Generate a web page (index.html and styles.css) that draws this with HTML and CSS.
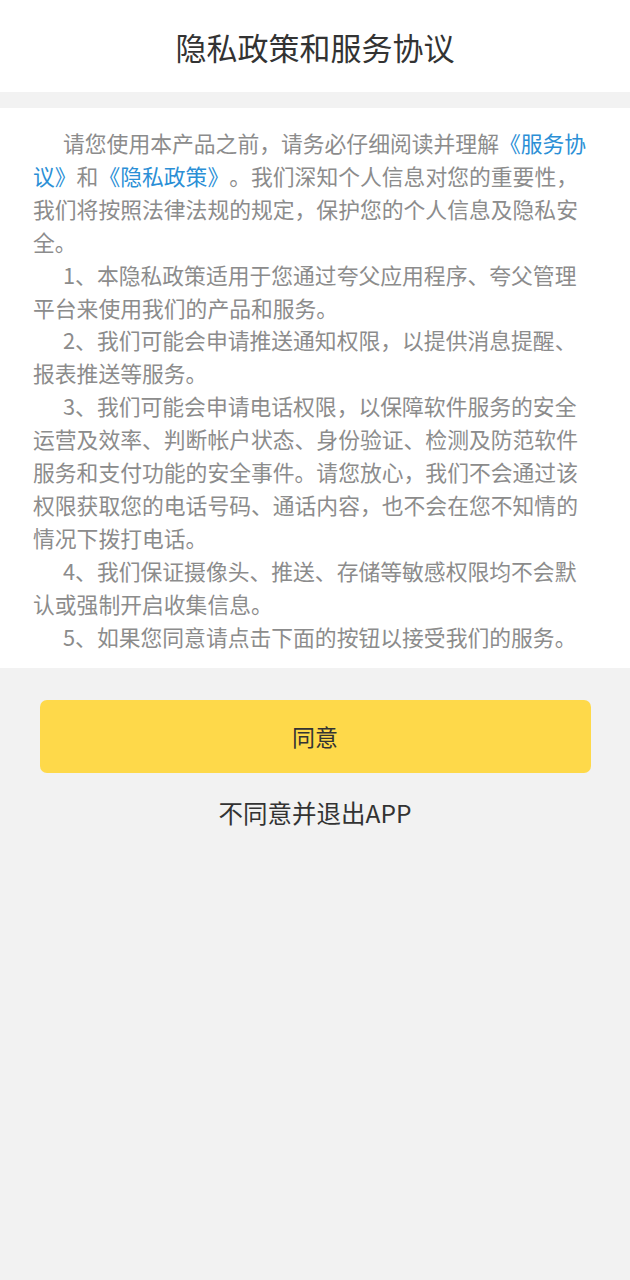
FILE: index.html
```html
<!DOCTYPE html>
<html lang="zh-CN">
<head>
<meta charset="utf-8">
<title>隐私政策和服务协议</title>
<link rel="stylesheet" href="styles.css">
</head>
<body>
<div class="page">
  <header class="header">隐私政策和服务协议</header>
  <section class="content">
    <p>请您使用本产品之前，请务必仔细阅读并理解<a class="link">《服务协议》</a>和<a class="link">《隐私政策》</a>。我们深知个人信息对您的重要性，我们将按照法律法规的规定，保护您的个人信息及隐私安全。</p>
    <p>1、本隐私政策适用于您通过夸父应用程序、夸父管理平台来使用我们的产品和服务。</p>
    <p>2、我们可能会申请推送通知权限，以提供消息提醒、报表推送等服务。</p>
    <p>3、我们可能会申请电话权限，以保障软件服务的安全运营及效率、判断帐户状态、身份验证、检测及防范软件服务和支付功能的安全事件。请您放心，我们不会通过该权限获取您的电话号码、通话内容，也不会在您不知情的情况下拨打电话。</p>
    <p>4、我们保证摄像头、推送、存储等敏感权限均不会默认或强制开启收集信息。</p>
    <p>5、如果您同意请点击下面的按钮以接受我们的服务。</p>
  </section>
  <div class="actions">
    <button class="agree">同意</button>
    <button class="disagree">不同意并退出APP</button>
  </div>
</div>
</body>
</html>
```

FILE: styles.css
```css
html, body {
  margin: 0;
  padding: 0;
  background: #f2f2f2;
}
body {
  font-family: "Noto Sans CJK SC", "Noto Sans", sans-serif;
  width: 630px;
  min-height: 1280px;
  text-spacing-trim: space-all;
}
.page {
  display: flex;
  flex-direction: column;
}
.header {
  height: 92px;
  background: #ffffff;
  display: flex;
  align-items: center;
  justify-content: center;
  font-size: 31px;
  color: #333333;
  margin-bottom: 16px;
}
.content {
  background: #ffffff;
  padding: 19px 33px 14px 33px;
  color: #8c8c8c;
  font-size: 21.8px;
  line-height: 32.9px;
  text-spacing-trim: space-all;
}
.content p {
  margin: 0;
  text-indent: 30px;
}
.link {
  color: #2b8fd6;
  text-decoration: none;
}
.actions {
  display: flex;
  flex-direction: column;
  align-items: center;
  padding-top: 32px;
}
.agree {
  width: 551px;
  height: 73px;
  border: none;
  border-radius: 7px;
  background: #fed94a;
  color: #333333;
  font-family: inherit;
  font-size: 23px;
  padding: 0;
}
.disagree {
  margin-top: 20px;
  border: none;
  background: transparent;
  color: #333333;
  font-family: inherit;
  font-size: 24.5px;
  padding: 0;
  height: 40px;
}
```
